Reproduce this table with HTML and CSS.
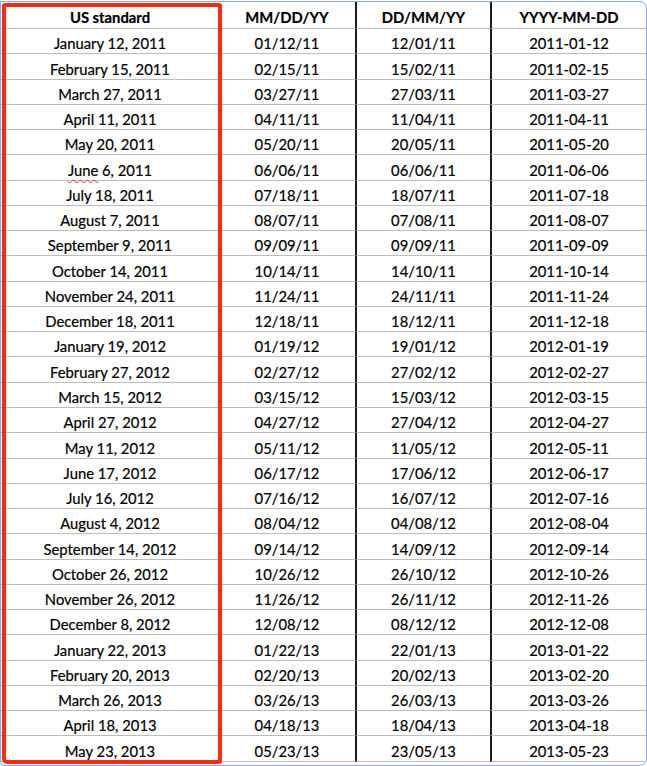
FILE: index.html
```html
<!DOCTYPE html>
<html>
<head>
<meta charset="utf-8">
<link rel="stylesheet" href="styles.css">
</head>
<body>
<div class="frame">
  <div class="grid">
    <div class="c h">US standard</div><div class="c h">MM/DD/YY</div><div class="c h d">DD/MM/YY</div><div class="c h d">YYYY-MM-DD</div>
    <div class="c">January 12, 2011</div><div class="c">01/12/11</div><div class="c d">12/01/11</div><div class="c d">2011-01-12</div>
    <div class="c">February 15, 2011</div><div class="c">02/15/11</div><div class="c d">15/02/11</div><div class="c d">2011-02-15</div>
    <div class="c">March 27, 2011</div><div class="c">03/27/11</div><div class="c d">27/03/11</div><div class="c d">2011-03-27</div>
    <div class="c">April 11, 2011</div><div class="c">04/11/11</div><div class="c d">11/04/11</div><div class="c d">2011-04-11</div>
    <div class="c">May 20, 2011</div><div class="c">05/20/11</div><div class="c d">20/05/11</div><div class="c d">2011-05-20</div>
    <div class="c"><span><span class="spell">June</span> 6, 2011</span></div><div class="c">06/06/11</div><div class="c d">06/06/11</div><div class="c d">2011-06-06</div>
    <div class="c">July 18, 2011</div><div class="c">07/18/11</div><div class="c d">18/07/11</div><div class="c d">2011-07-18</div>
    <div class="c">August 7, 2011</div><div class="c">08/07/11</div><div class="c d">07/08/11</div><div class="c d">2011-08-07</div>
    <div class="c">September 9, 2011</div><div class="c">09/09/11</div><div class="c d">09/09/11</div><div class="c d">2011-09-09</div>
    <div class="c">October 14, 2011</div><div class="c">10/14/11</div><div class="c d">14/10/11</div><div class="c d">2011-10-14</div>
    <div class="c">November 24, 2011</div><div class="c">11/24/11</div><div class="c d">24/11/11</div><div class="c d">2011-11-24</div>
    <div class="c">December 18, 2011</div><div class="c">12/18/11</div><div class="c d">18/12/11</div><div class="c d">2011-12-18</div>
    <div class="c">January 19, 2012</div><div class="c">01/19/12</div><div class="c d">19/01/12</div><div class="c d">2012-01-19</div>
    <div class="c">February 27, 2012</div><div class="c">02/27/12</div><div class="c d">27/02/12</div><div class="c d">2012-02-27</div>
    <div class="c">March 15, 2012</div><div class="c">03/15/12</div><div class="c d">15/03/12</div><div class="c d">2012-03-15</div>
    <div class="c">April 27, 2012</div><div class="c">04/27/12</div><div class="c d">27/04/12</div><div class="c d">2012-04-27</div>
    <div class="c">May 11, 2012</div><div class="c">05/11/12</div><div class="c d">11/05/12</div><div class="c d">2012-05-11</div>
    <div class="c">June 17, 2012</div><div class="c">06/17/12</div><div class="c d">17/06/12</div><div class="c d">2012-06-17</div>
    <div class="c">July 16, 2012</div><div class="c">07/16/12</div><div class="c d">16/07/12</div><div class="c d">2012-07-16</div>
    <div class="c">August 4, 2012</div><div class="c">08/04/12</div><div class="c d">04/08/12</div><div class="c d">2012-08-04</div>
    <div class="c">September 14, 2012</div><div class="c">09/14/12</div><div class="c d">14/09/12</div><div class="c d">2012-09-14</div>
    <div class="c">October 26, 2012</div><div class="c">10/26/12</div><div class="c d">26/10/12</div><div class="c d">2012-10-26</div>
    <div class="c">November 26, 2012</div><div class="c">11/26/12</div><div class="c d">26/11/12</div><div class="c d">2012-11-26</div>
    <div class="c">December 8, 2012</div><div class="c">12/08/12</div><div class="c d">08/12/12</div><div class="c d">2012-12-08</div>
    <div class="c">January 22, 2013</div><div class="c">01/22/13</div><div class="c d">22/01/13</div><div class="c d">2013-01-22</div>
    <div class="c">February 20, 2013</div><div class="c">02/20/13</div><div class="c d">20/02/13</div><div class="c d">2013-02-20</div>
    <div class="c">March 26, 2013</div><div class="c">03/26/13</div><div class="c d">26/03/13</div><div class="c d">2013-03-26</div>
    <div class="c">April 18, 2013</div><div class="c">04/18/13</div><div class="c d">18/04/13</div><div class="c d">2013-04-18</div>
    <div class="c">May 23, 2013</div><div class="c">05/23/13</div><div class="c d">23/05/13</div><div class="c d">2013-05-23</div>
  </div>
  <div class="highlight"></div>
</div>
</body>
</html>
```
FILE: styles.css
```css
html, body {
  margin: 0;
  padding: 0;
  background: #ffffff;
}
.frame {
  position: relative;
  box-sizing: border-box;
  width: 647px;
  height: 765px;
  margin-top: 1px;
  border: 1px solid #8ea6e4;
  border-radius: 0 7px 7px 4px;
  overflow: hidden;
  background: #fff;
  font-family: Lato, "Liberation Sans", sans-serif;
  font-size: 14.8px;
  color: #000;
  -webkit-text-stroke: 0.2px #000;
}
.grid {
  display: grid;
  grid-template-columns: 218px 136px 135px 1fr;
  grid-template-rows: 27px;
  grid-auto-rows: 25.28px;
}
.c {
  box-sizing: border-box;
  display: flex;
  align-items: flex-end;
  justify-content: center;
  padding-bottom: 1px;
  border-bottom: 1px solid #bcbcbc;
  white-space: nowrap;
  line-height: 18px;
}
.h {
  font-weight: 700;
  padding-bottom: 2px;
}
.d {
  border-left: 2px solid #1c1c1c;
}
.spell {
  text-decoration: underline wavy #e8352a;
  text-decoration-thickness: 1px;
  text-underline-offset: 3px;
}
.highlight {
  position: absolute;
  left: 1px;
  top: 1px;
  width: 220px;
  height: 761px;
  box-sizing: border-box;
  border: 4px solid #fb2a0a;
  border-radius: 3px 3px 3px 5px;
}
```
